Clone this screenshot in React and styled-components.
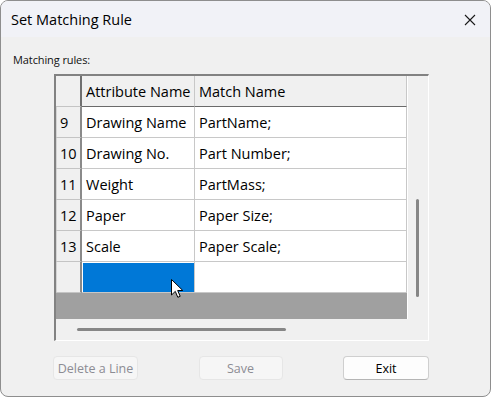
import styled, { createGlobalStyle } from "styled-components";

const rows = [
  { n: 9, attr: "Drawing Name", match: "PartName;" },
  { n: 10, attr: "Drawing No.", match: "Part Number;" },
  { n: 11, attr: "Weight", match: "PartMass;" },
  { n: 12, attr: "Paper", match: "Paper Size;" },
  { n: 13, attr: "Scale", match: "Paper Scale;" },
];

export default function App() {
  return (
    <>
      <Global />
      <Window>
        <TitleBar>
          <Title>Set Matching Rule</Title>
          <Close>
            <svg width="12" height="12" viewBox="0 0 12 12">
              <path d="M1 1 L11 11 M11 1 L1 11" stroke="#1a1a1a" strokeWidth="1.1" />
            </svg>
          </Close>
        </TitleBar>

        <Body>
          <Label>Matching rules:</Label>

          <Grid>
            <Corner />
            <HeadCell>Attribute Name</HeadCell>
            <HeadCell>Match Name</HeadCell>
            <VScroll>
              <VThumb />
            </VScroll>

            {rows.map((r) => (
              <Row key={r.n} {...r} />
            ))}

            <RowHead />
            <Cell $selected>
              <Cursor width="13" height="20" viewBox="0 0 13 20">
                <path
                  d="M0.5 0.5 L0.5 16 L4.3 12.4 L6.8 18.3 L9.2 17.3 L6.7 11.5 L11.8 11.5 Z"
                  fill="#fff"
                  stroke="#000"
                  strokeWidth="1"
                  strokeLinejoin="round"
                />
              </Cursor>
            </Cell>
            <Cell />

            <Filler />
            <HScroll>
              <HThumb />
            </HScroll>
          </Grid>

          <Buttons>
            <Button disabled $w={85}>Delete a Line</Button>
            <Button disabled $w={84}>Save</Button>
            <Button $w={86}>Exit</Button>
          </Buttons>
        </Body>
      </Window>
    </>
  );
}

function Row({ n, attr, match }) {
  return (
    <>
      <RowHead>{n}</RowHead>
      <Cell>{attr}</Cell>
      <Cell>{match}</Cell>
    </>
  );
}

const Global = createGlobalStyle`
  html, body {
    margin: 0;
    padding: 0;
    background: #ffffff;
  }
  * {
    box-sizing: border-box;
  }
`;

const Window = styled.div`
  width: 491px;
  height: 397px;
  border: 1px solid #8e8e8e;
  border-radius: 8px;
  overflow: hidden;
  background: #f0f0f0;
  display: flex;
  flex-direction: column;
  font-family: "Open Sans", "Noto Sans", sans-serif;
  color: #000;
`;

const TitleBar = styled.div`
  height: 36px;
  background: #f1f2f7;
  display: flex;
  align-items: center;
  justify-content: space-between;
  padding: 0 14px 0 10px;
`;

const Title = styled.div`
  font-size: 14.5px;
  margin-top: 1px;
`;

const Close = styled.div`
  display: flex;
  align-items: center;
  margin-top: 1px;
`;

const Body = styled.div`
  padding: 15px 0 0 12px;
  display: flex;
  flex-direction: column;
`;

const Label = styled.div`
  font-size: 11px;
  letter-spacing: -0.1px;
  line-height: 16px;
  height: 16px;
  color: #111;
`;

const Grid = styled.div`
  margin: 6px 0 0 41px;
  width: 375px;
  display: grid;
  grid-template-columns: 26px 113px 212px 21px;
  grid-template-rows: 31px repeat(6, 31px) 26px 21px;
  border-top: 2px solid #828282;
  border-left: 2px solid #828282;
  border-right: 1px solid #ffffff;
  border-bottom: 1px solid #ffffff;
  font-size: 14.5px;
`;

const Corner = styled.div`
  background: #f0f0f0;
  border-right: 2px solid #6f6f6f;
  border-bottom: 1px solid #c4c4c4;
`;

const HeadCell = styled.div`
  background: #f0f0f0;
  border-right: 1px solid #c8c8c8;
  border-bottom: 1px solid #6a6a6a;
  display: flex;
  align-items: center;
  padding-left: 4px;
  white-space: nowrap;
  overflow: hidden;
`;

const RowHead = styled.div`
  background: #f0f0f0;
  border-right: 2px solid #8a8a8a;
  border-bottom: 1px solid #c4c4c4;
  box-shadow: inset 1px 0 0 #d4d4d4;
  display: flex;
  align-items: center;
  padding-left: 4px;
`;

const Cell = styled.div`
  position: relative;
  background: ${(p) => (p.$selected ? "#0078d7" : "#ffffff")};
  box-shadow: ${(p) => (p.$selected ? "inset 1px 1px 0 #fff" : "none")};
  border-right: 1px solid #c8c8c8;
  border-bottom: 1px solid #c8c8c8;
  display: flex;
  align-items: center;
  padding-left: 4px;
  white-space: nowrap;
`;

const Cursor = styled.svg`
  position: absolute;
  left: 89px;
  top: 17px;
`;

const VScroll = styled.div`
  grid-row: span 8;
  background: #f0f0f0;
  border-left: 1px solid #ffffff;
  padding: 123px 0 0 8px;
`;

const VThumb = styled.div`
  width: 3px;
  height: 98px;
  border-radius: 2px;
  background: #868686;
`;

const Filler = styled.div`
  grid-column: span 3;
  background: #a0a0a0;
`;

const HScroll = styled.div`
  grid-column: span 4;
  background: #f0f0f0;
  padding: 9px 0 0 21px;
`;

const HThumb = styled.div`
  width: 209px;
  height: 3px;
  border-radius: 2px;
  background: #868686;
`;

const Buttons = styled.div`
  margin: 15px 0 0 40px;
  width: 376px;
  display: flex;
  justify-content: space-between;
`;

const Button = styled.button`
  width: ${(p) => p.$w}px;
  height: 24px;
  padding: 0;
  font-family: inherit;
  font-size: 12.5px;
  border-radius: 4px;
  border: 1px solid ${(p) => (p.disabled ? "#e6e6e6" : "#cfcfcf")};
  border-bottom-color: ${(p) => (p.disabled ? "#e6e6e6" : "#b5b5b5")};
  background: ${(p) => (p.disabled ? "#f6f6f6" : "#fdfdfd")};
  color: ${(p) => (p.disabled ? "#8c8c94" : "#000")};
`;
